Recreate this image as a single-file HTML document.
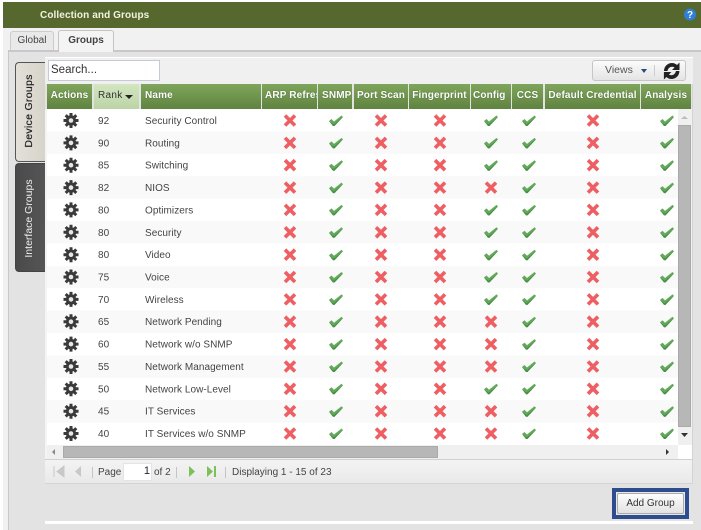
<!DOCTYPE html>
<html><head><meta charset="utf-8"><style>
html,body{margin:0;padding:0}
body{width:701px;height:530px;position:relative;overflow:hidden;background:#fff;font-family:"Liberation Sans",sans-serif;font-size:10px;color:#333}
#w{position:absolute;left:0;top:0;width:701px;height:530px;filter:blur(.3px)}
div div{position:absolute;box-sizing:border-box;white-space:nowrap}
.h{top:84px;height:25px;background:linear-gradient(#7fa55b,#5f8340);color:#fff;font-weight:bold;font-size:10px;letter-spacing:.15px;line-height:24px;text-align:center;text-shadow:0 0 1px #3d5a28}
</style></head><body><div id="w">
<div style="left:3px;top:2px;width:698px;height:26px;background:#57682f"></div>
<div style="left:40px;top:9px;color:#f2f2e0;font-weight:bold;font-size:10px;line-height:13px;letter-spacing:.1px">Collection and Groups</div>
<div style="left:3px;top:28px;width:698px;height:24px;background:#f1f1f1"></div>
<div style="left:3px;top:50px;width:698px;height:480px;background:#e3e3e3"></div>
<div style="left:3px;top:50px;width:6px;height:480px;background:#f1f1f1;border-right:1px solid #c8c8c8"></div>
<div style="left:9px;top:50px;width:692px;height:2px;background:#c8c8c8"></div>
<div style="left:10px;top:31px;width:44px;height:19px;background:#e9e9e9;border:1px solid #ccc;border-bottom:0;border-radius:3px 3px 0 0;text-align:center;line-height:18px;font-size:10px;color:#444">Global</div>
<div style="left:58px;top:30px;width:56px;height:22px;background:#f4f4f4;border:1px solid #c4c4c4;border-bottom:0;border-radius:3px 3px 0 0;text-align:center;line-height:20px;font-size:10px;font-weight:bold;color:#444">Groups</div>
<div style="left:15px;top:62px;width:30px;height:100px;background:linear-gradient(90deg,#e2e0d8,#d6d4ca);border:1px solid #555;border-right:0;border-radius:4px 0 0 4px"></div>
<div style="left:15px;top:163px;width:30px;height:109px;background:linear-gradient(90deg,#4a4a4a,#555);border:1px solid #444;border-right:0;border-radius:4px 0 0 4px"></div>
<div style="left:45px;top:57px;width:648px;height:27px;background:#f0f0f0;border-top:1px solid #fff"></div>
<div style="left:48px;top:60px;width:112px;height:21px;background:#fff;border:1px solid #c4cbd6;font-size:11.5px;line-height:19px;padding-left:2px;color:#333">Search...</div>
<div style="left:592px;top:60px;width:94px;height:21px;background:linear-gradient(#fbfbfb,#e4e4e4);border:1px solid #c6c6c6;border-radius:3px"></div>
<div style="left:605px;top:60px;font-size:10.5px;line-height:21px;color:#555">Views</div>
<div class="h" style="left:47px;width:45px">Actions</div>
<div class="h" style="left:94px;width:45px;background:linear-gradient(#d3e6bf,#bcd3a6);color:#333;font-weight:normal;text-shadow:none;text-align:left;padding-left:4px;letter-spacing:.3px">Rank</div>
<div class="h" style="left:141px;width:120px;text-align:left;padding-left:4px">Name</div>
<div class="h" style="left:262px;width:55px;overflow:hidden;text-align:left;padding-left:3px">ARP Refresh</div>
<div class="h" style="left:318px;width:34px;overflow:hidden;text-align:left;padding-left:4px">SNMP</div>
<div class="h" style="left:354px;width:54px">Port Scan</div>
<div class="h" style="left:409px;width:61px">Fingerprint</div>
<div class="h" style="left:471px;width:40px;text-align:left;padding-left:2px">Config</div>
<div class="h" style="left:512px;width:31px">CCS</div>
<div class="h" style="left:545px;width:95px">Default Credential</div>
<div class="h" style="left:641px;width:50px">Analysis</div>
<div style="left:47px;top:109px;width:646px;height:350px;background:#fff"></div>
<div style="left:45px;top:445px;width:633px;height:14px;background:#f0f0f0"></div>
<div style="left:678px;top:109px;width:14px;height:336px;background:#f0f0f0"></div>
<div style="left:678px;top:125px;width:13px;height:302px;background:#b7b7b7;border:1px solid #aaa"></div>
<div style="left:63px;top:446px;width:375px;height:12px;background:#b7b7b7;border:1px solid #aaa"></div>
<div style="left:45px;top:459px;width:648px;height:25px;background:linear-gradient(#f3f3f3,#e9e9e9);border-top:1px solid #d0d0d0;border-bottom:1px solid #d4d4d4"></div>
<div style="left:45px;top:109px;width:2px;height:350px;background:#f4f4f4"></div>
<div style="left:692px;top:84px;width:1px;height:400px;background:#d4d4d4"></div>
<div style="left:98px;top:466px;font-size:10px;line-height:14px;color:#444">Page</div>
<div style="left:123px;top:463px;width:29px;height:18px;background:#fff;border:1px solid #e4e4e4;text-align:right;padding-right:1px;font-size:11px;line-height:15px;color:#223">1</div>
<div style="left:154px;top:466px;font-size:10px;line-height:14px;color:#444">of 2</div>
<div style="left:232px;top:466px;font-size:10px;line-height:14px;color:#444">Displaying 1 - 15 of 23</div>
<div style="left:45px;top:521px;width:648px;height:3px;background:#fff"></div>
<div style="left:612px;top:488px;width:77px;height:31px;background:#e8e8e8;border:4px solid #2d4d8e"></div>
<div style="left:617px;top:493px;width:67px;height:21px;background:linear-gradient(#fdfdfd,#e2e2e2);border:1px solid #aaa;border-radius:2px;text-align:center;font-size:10px;line-height:20px;color:#333">Add Group</div>
<svg width="701" height="530" style="position:absolute;left:0;top:0" font-family="Liberation Sans, sans-serif" font-size="10" fill="#444">
<defs>
<g id="x"><path d="M-5 -5L5 5M5 -5L-5 5" stroke="#ee5f63" stroke-width="3.6" fill="none"/></g>
<g id="c"><path d="M-7 0.500L-4.500 -1.500L-2 1L5.500 -5L7 -3.500L-1.500 5.500L-3 5.500Z" fill="#62aa5a"/><path d="M-7 0.500L-3 5.500L-1.500 5.500L7 -3.500L-1.800 3.500L-3 3.500Z" fill="#4a8f48"/></g>
<g id="g"><path d="M0 -7.500V7.500M-7.500 0H7.500M-5.300 -5.300L5.300 5.300M5.300 -5.300L-5.300 5.300" stroke="#3a3a3a" stroke-width="3"/><circle r="5.200" fill="#3a3a3a"/><circle r="2.300" fill="#e8e8e8"/></g>
<g id="r"><use href="#g" x="71"/><use href="#x" x="290"/><use href="#c" x="336"/><use href="#x" x="381"/><use href="#x" x="440"/><use href="#c" x="529"/><use href="#x" x="593"/><use href="#c" x="667"/></g>
</defs>
<rect x="47" y="131.400" width="631" height="22.400" fill="#f9f9f9"/><rect x="47" y="176.200" width="631" height="22.400" fill="#f9f9f9"/><rect x="47" y="221" width="631" height="22.400" fill="#f9f9f9"/><rect x="47" y="265.800" width="631" height="22.400" fill="#f9f9f9"/><rect x="47" y="310.600" width="631" height="22.400" fill="#f9f9f9"/><rect x="47" y="355.400" width="631" height="22.400" fill="#f9f9f9"/><rect x="47" y="400.200" width="631" height="22.400" fill="#f9f9f9"/>
<text transform="rotate(-90 32 111)" x="32" y="111" text-anchor="middle" font-size="10.500" fill="#222" stroke="#222" stroke-width=".2" letter-spacing=".3">Device Groups</text>
<text transform="rotate(-90 32 218.500)" x="32" y="218.500" text-anchor="middle" font-size="10.500" fill="#eee">Interface Groups</text>
<g letter-spacing=".05">
<use href="#r" y="120.500"/><text x="98" y="124">92</text><text x="145" y="124">Security Control</text><use href="#c" x="491" y="120.500"/>
<use href="#r" y="142.900"/><text x="98" y="146.500">90</text><text x="145" y="146.500">Routing</text><use href="#c" x="491" y="142.900"/>
<use href="#r" y="165.200"/><text x="98" y="168.700">85</text><text x="145" y="168.700">Switching</text><use href="#c" x="491" y="165.200"/>
<use href="#r" y="187.600"/><text x="98" y="191.100">82</text><text x="145" y="191.100">NIOS</text><use href="#x" x="491" y="187.600"/>
<use href="#r" y="209.900"/><text x="98" y="213.400">80</text><text x="145" y="213.400">Optimizers</text><use href="#c" x="491" y="209.900"/>
<use href="#r" y="232.300"/><text x="98" y="235.800">80</text><text x="145" y="235.800">Security</text><use href="#c" x="491" y="232.300"/>
<use href="#r" y="254.700"/><text x="98" y="258.200">80</text><text x="145" y="258.200">Video</text><use href="#c" x="491" y="254.700"/>
<use href="#r" y="277"/><text x="98" y="280.500">75</text><text x="145" y="280.500">Voice</text><use href="#c" x="491" y="277"/>
<use href="#r" y="299.400"/><text x="98" y="302.900">70</text><text x="145" y="302.900">Wireless</text><use href="#c" x="491" y="299.400"/>
<use href="#r" y="321.700"/><text x="98" y="325.200">65</text><text x="145" y="325.200">Network Pending</text><use href="#x" x="491" y="321.700"/>
<use href="#r" y="344.100"/><text x="98" y="347.600">60</text><text x="145" y="347.600">Network w/o SNMP</text><use href="#x" x="491" y="344.100"/>
<use href="#r" y="366.500"/><text x="98" y="370">55</text><text x="145" y="370">Network Management</text><use href="#x" x="491" y="366.500"/>
<use href="#r" y="388.800"/><text x="98" y="392.300">50</text><text x="145" y="392.300">Network Low-Level</text><use href="#c" x="491" y="388.800"/>
<use href="#r" y="411.200"/><text x="98" y="414.700">45</text><text x="145" y="414.700">IT Services</text><use href="#x" x="491" y="411.200"/>
<use href="#r" y="433.500"/><text x="98" y="437">40</text><text x="145" y="437">IT Services w/o SNMP</text><use href="#x" x="491" y="433.500"/>
</g>
<!-- help icon -->
<circle cx="690" cy="14.500" r="6" fill="#2f7fd8"/><text x="690" y="18" text-anchor="middle" font-size="10" font-weight="bold" fill="#fff">?</text>
<!-- rank sort arrow -->
<path d="M125 95h8l-4 4z" fill="#222"/>
<!-- views -->
<path d="M641 69h6l-3 4z" fill="#2a4a7a"/><path d="M654.500 65v11" stroke="#ccc"/>
<path id="ra" d="M664 71C664 66 668 63 672 63C674 63 676 64 677 65L679.500 62.500V70H672L674.500 67.500C671 65.500 668 68 667.500 71Z" fill="#222"/>
<path d="M664 71C664 66 668 63 672 63C674 63 676 64 677 65L679.500 62.500V70H672L674.500 67.500C671 65.500 668 68 667.500 71Z" fill="#222" transform="rotate(180 671.700 71)"/>
<!-- scroll arrows -->
<path d="M681 119h7l-3.500 -3z" fill="#bbb"/><path d="M681 433h7l-3.500 4z" fill="#333"/>
<path d="M55 449v6l-3 -3z" fill="#888"/><path d="M666 449v6l3 -3z" fill="#333"/>
<!-- pagination -->
<path d="M54 466v11M64 466v11l-7 -5.500z" stroke="#c8c8c8" fill="#c8c8c8"/><path d="M81 466v11l-6 -5.500z" fill="#c8c8c8"/>
<path d="M189 466v11l6 -5.500z" fill="#7cc05a"/><path d="M207 466v11l6 -5.500z" fill="#7cc05a"/><path d="M215 466v11" stroke="#7cc05a" stroke-width="2"/>
<path d="M92.500 467v11M176.500 467v11M225.500 467v11" stroke="#c4c4c4"/>
</svg>
</div></body></html>
